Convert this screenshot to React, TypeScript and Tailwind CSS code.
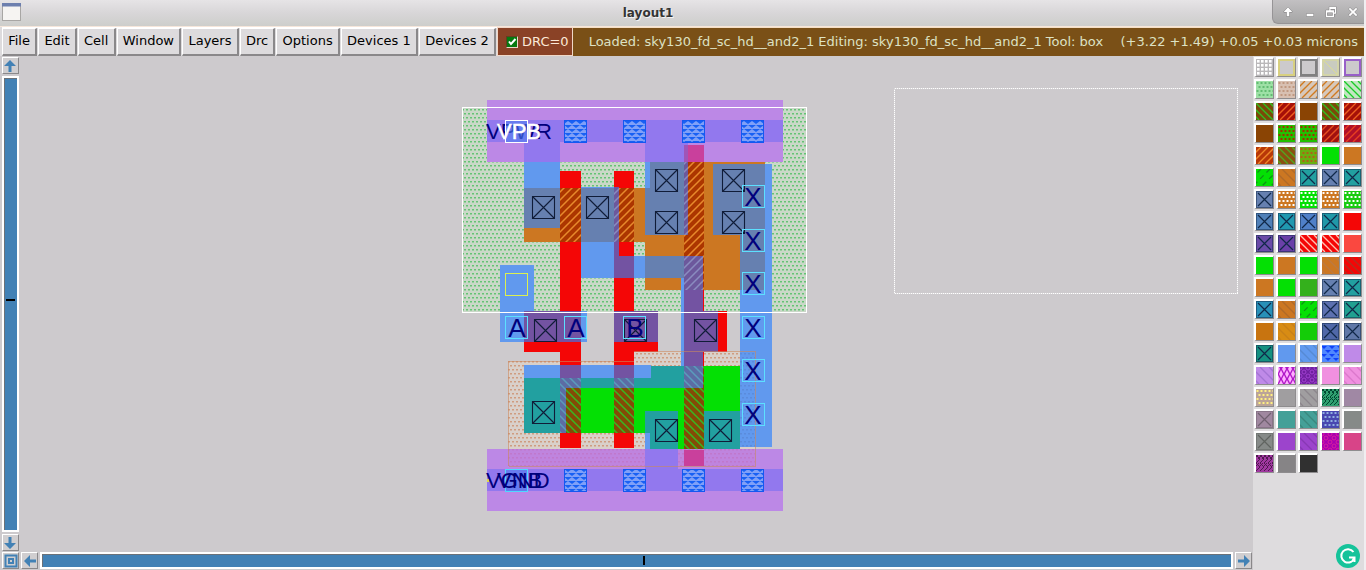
import type { ReactNode } from "react";

type Swatch = [kind: string, bg: string, fg?: string];
type Box = [x1: number, y1: number, x2: number, y2: number, fill: string];

const TEAL = "#22a0a0";
const STEEL = "#6680b0";
const GREEN = "#04e004";
const ORANGE = "#cc7722";
const BROWN = "#8a4404";
const DARKRED = "#a51008";
const SKY = "#6199ee";
const LILAC = "#bf8ae8";
const RED = "#f40606";
const PURPLE = "#7353a2";
const VIOLET = "#9278ee";

const swatches: Swatch[] = [
  ["grid", "#bab8ba", "#ffffff"], ["frame", "#cccacc", "#d8d080"], ["frame", "#cccacc", "#808080"], ["backframe", "#c9cbc0", "#dcdc90"], ["frame", "#cccacc", "#9860c8"],
  ["dots", "#9ee0a6", "#62bc72"], ["dots", "#d8c0b2", "#c09880"], ["fwd", "#d6c8bc", "#d07a20"], ["fwd", "#d6c8bc", "#d07a20"], ["back", "#c2e6c2", "#18cc28"],
  ["back", "#7a4a08", "#30c020"], ["fwd", DARKRED, "#f06020"], ["solid", BROWN], ["back", "#7a4a08", "#30c020"], ["fwd", DARKRED, "#f06020"],
  ["solid", BROWN], ["dots", "#22c000", "#a03000"], ["dots", "#22c000", "#a03000"], ["fwd", "#a01010", "#e85020"], ["fwd", "#b01028", "#e84020"],
  ["fwd", "#b83808", "#f08828"], ["back", "#8a5010", "#50a820"], ["dots", "#68b010", "#b06018"], ["solid", GREEN], ["solid", ORANGE],
  ["wide", GREEN, "#109018"], ["backwide", ORANGE, "#b06a28"], ["x", TEAL], ["x", STEEL], ["x", TEAL],
  ["x", STEEL], ["dots", ORANGE, "#ffffff"], ["dots", GREEN, "#ffffff"], ["dots", ORANGE, "#ffffff"], ["dots", "#18cc10", "#ffffff"],
  ["x", "#5080b8"], ["x", "#2098b0"], ["x", "#5080c8"], ["x", "#2098a8"], ["solid", RED],
  ["x", "#6a4aa8"], ["x", "#6a40a8"], ["back", RED, "#ffc0b0"], ["back", RED, "#ffc0b0"], ["solid", "#fa4840"],
  ["solid", GREEN], ["solid", ORANGE], ["solid", GREEN], ["backwide", ORANGE, "#bc7a40"], ["back", RED, "#b03020"],
  ["solid", ORANGE], ["solid", GREEN], ["solid", "#34b01c"], ["x", STEEL], ["x", TEAL],
  ["x", "#2890b8"], ["backwide", ORANGE, "#b06a28"], ["wide", GREEN, "#109018"], ["x", "#5c70b0"], ["x", "#20a090"],
  ["solid", "#c87410"], ["backwide", "#d88c14", "#c88018"], ["solid", "#14cc08"], ["x", "#5068a8"], ["x", "#6078a8"],
  ["x", "#149080"], ["solid", SKY], ["backwide", SKY, "#568ad4"], ["scale", "#5088ff", "#1040f8"], ["solid", LILAC],
  ["backwide", LILAC, "#a474d4"], ["diamond", "#b018c8", "#ffb0ff"], ["ring", "#7020a0", "#a040d0"], ["solid", "#f090e0"], ["backwide", "#f090e0", "#dc78cc"],
  ["dots", "#bba498", "#fff080"], ["solid", "#a09ea0"], ["backwide", "#a09ea0", "#8c868c"], ["maze", "#30a070", "#004830"], ["solid", "#a088a4"],
  ["xsoft", "#a088a0", "#706070"], ["solid", "#44a098"], ["backwide", "#44a098", "#3a887e"], ["dots", "#4848b0", "#90b0e0"], ["solid", "#868a88"],
  ["xsoft", "#868a88", "#606460"], ["solid", "#9c44cc"], ["backwide", "#9c44cc", "#8838b4"], ["ring", "#a800b0", "#d820a0"], ["solid", "#d84488"],
  ["maze", "#a038a0", "#501850"], ["solid", "#868486"], ["solid", "#303030"],
];

function SwatchArt({ kind, bg, fg = "#102848" }: { kind: string; bg: string; fg?: string }) {
  const marks: ReactNode[] = [];
  const staggered = (draw: (x: number, y: number, k: string) => ReactNode, step: number) => {
    for (let r = 0; r * step < 17; r++)
      for (let c = 0; c < 5; c++) marks.push(draw(c * 4 + (r % 2) * 2, r * step, `${r}-${c}`));
  };
  if (kind === "grid")
    for (let r = 0; r < 4; r++)
      for (let c = 0; c < 4; c++) marks.push(<rect key={`${r}${c}`} x={c * 4 + 1} y={r * 4 + 1} width="2.600" height="2.600" fill={fg} />);
  if (kind === "dots") staggered((x, y, k) => <rect key={k} x={x + 0.5} y={y + 1} width="2" height="2" fill={fg} />, 4);
  if (kind === "scale") staggered((x, y, k) => <path key={k} d={`M${x * 2 - 1} ${y + 1}h6l-3 3z`} fill={fg} />, 4);
  if (kind === "diamond") staggered((x, y, k) => <path key={k} d={`M${x * 1.5} ${y - 2}l2 4l-2 4l-2-4z`} fill={fg} />, 5);
  if (kind === "ring") staggered((x, y, k) => <circle key={k} cx={x * 2} cy={y + 1} r="2" fill="none" stroke={fg} />, 4);
  if (kind === "maze")
    for (let i = -16; i < 20; i += 4)
      marks.push(<path key={i} d={`M${i} 0l4 4l-4 4l4 4l-4 4M${i + 2} 0l-4 4M${i + 3} 8l-4 4`} stroke={fg} fill="none" />);
  const step = kind === "wide" || kind === "backwide" ? 9 : 7;
  if (kind.startsWith("fwd") || kind === "wide")
    for (let i = 5; i < 34; i += step) marks.push(<path key={i} d={`M${i} 0L${i - 17} 17`} stroke={fg} strokeWidth="1.300" strokeDasharray={kind === "wide" ? "5 4" : undefined} />);
  if (kind === "back" || kind === "backwide")
    for (let i = -14; i < 17; i += step) marks.push(<path key={i} d={`M${i} 0l17 17`} stroke={fg} strokeWidth="1.300" />);
  if (kind === "backframe") marks.push(<path key="d" d="M1 1l14 14" stroke={fg} />);
  if (kind === "frame" || kind === "backframe")
    marks.push(<rect key="f" x="1" y="1" width="15" height="15" fill="none" stroke={fg} strokeWidth={kind === "frame" ? 2 : 1} />);
  if (kind === "x" || kind === "xsoft") {
    marks.push(<rect key="b" x=".5" y=".5" width="16" height="16" stroke={fg} strokeOpacity=".5" fill="none" />);
    marks.push(<path key="x" d="M2 2l13 13M15 2L2 15" stroke={fg} fill="none" strokeWidth="1.200" />);
  }
  return (
    <svg viewBox="0 0 17 17" className="block size-[17px] overflow-hidden" aria-hidden="true">
      <rect width="17" height="17" fill={bg} />
      {marks}
    </svg>
  );
}

const wells: Box[] = [
  [462, 107, 807, 313, "url(#well)"],
];

const shapes: Box[] = [
  // implant
  [508, 361, 634, 466, "url(#implant)"],
  [634, 351, 755, 466, "url(#implant)"],
  // p diffusion
  [524, 188, 645, 242, ORANGE],
  [650, 162, 765, 188, ORANGE],
  [645, 188, 765, 290, ORANGE],
  // n diffusion
  [524, 378, 651, 433, GREEN],
  [645, 366, 740, 450, GREEN],
  // poly
  [560, 171, 581, 448, RED],
  [614, 171, 634, 448, RED],
  [684, 145, 704, 466, RED],
  [524, 311, 581, 352, RED],
  [614, 311, 658, 352, RED],
  [684, 311, 727, 352, RED],
  // transistors
  [560, 188, 581, 242, "url(#pfet)"],
  [619, 188, 634, 242, "url(#pfet)"],
  [684, 162, 704, 290, "url(#pfet)"],
  [560, 378, 581, 433, "url(#nfet)"],
  [614, 378, 634, 433, "url(#nfet)"],
  [684, 366, 704, 450, "url(#nfet)"],
  // local interconnect
  [524, 120, 560, 188, SKY],
  [524, 188, 560, 228, STEEL],
  [581, 187, 619, 278, SKY],
  [581, 188, 619, 242, STEEL],
  [614, 187, 619, 256, PURPLE],
  [614, 188, 619, 242, "url(#pfetli)"],
  [619, 256, 684, 278, SKY],
  [614, 256, 634, 278, PURPLE],
  [645, 256, 684, 278, STEEL],
  [645, 162, 650, 188, SKY],
  [650, 162, 684, 235, STEEL],
  [645, 188, 684, 235, STEEL],
  [684, 162, 688, 235, "url(#pfetli)"],
  [681, 278, 684, 366, SKY],
  [684, 256, 703, 290, "url(#pfetli)"],
  [684, 290, 703, 366, PURPLE],
  [684, 311, 718, 352, PURPLE],
  [740, 164, 772, 447, SKY],
  [713, 164, 765, 235, STEEL],
  [740, 235, 765, 290, STEEL],
  [740, 353, 755, 447, "url(#implantli)"],
  [500, 265, 534, 342, SKY],
  [524, 311, 587, 342, SKY],
  [524, 311, 581, 342, PURPLE],
  [614, 311, 658, 342, PURPLE],
  [524, 365, 651, 378, SKY],
  [524, 378, 651, 388, TEAL],
  [651, 366, 684, 388, TEAL],
  [524, 378, 560, 433, TEAL],
  [560, 365, 581, 378, PURPLE],
  [614, 365, 634, 378, PURPLE],
  [560, 378, 581, 388, "url(#nfetli)"],
  [614, 378, 634, 388, "url(#nfetli)"],
  [684, 366, 703, 388, "url(#nfetli)"],
  [560, 388, 566, 433, "url(#nfetli)"],
  [645, 411, 678, 450, TEAL],
  [645, 433, 650, 450, SKY],
  [704, 411, 740, 450, TEAL],
];

const metals: Box[] = [
  [487, 100, 783, 162, "#bc88e6"],
  [487, 120, 783, 142, VIOLET],
  [524, 142, 560, 162, VIOLET],
  [645, 142, 688, 162, VIOLET],
  [688, 145, 704, 162, "#c9409c"],
  [684, 145, 688, 162, "#a055b8"],
  [487, 449, 783, 511, "#bc88e6"],
  [508, 449, 755, 466, "url(#implantmetal)"],
  [487, 469, 783, 491, VIOLET],
  [645, 449, 678, 469, VIOLET],
  [684, 450, 704, 466, "#c9409c"],
];

const contacts = [[543, 208], [597, 208], [666, 181], [666, 223], [733, 181], [733, 223], [545, 331], [635, 331], [705, 331], [543, 413], [666, 431], [720, 431]];
const vias = [575, 634, 693, 752];
const pins = [[516, 328, "A"], [575, 328, "A"], [634, 328, "B"], [753, 197, "X"], [753, 241, "X"], [753, 284, "X"], [753, 328, "X"], [753, 371, "X"], [753, 415, "X"]] as const;

function Hatch({ id, bg, fg, back = false }: { id: string; bg: string; fg: string; back?: boolean }) {
  return (
    <pattern id={id} width="8" height="8" patternUnits="userSpaceOnUse">
      <rect width="8" height="8" fill={bg} />
      <path d={back ? "M-1 -1L9 9M-1 7l2 2M7 -1l2 2" : "M-1 9L9 -1M-1 1l2-2M7 9l2-2"} stroke={fg} strokeWidth="1.500" />
    </pattern>
  );
}

function Stipple({ id, bg, fg }: { id: string; bg: string; fg: string }) {
  return (
    <pattern id={id} width="4" height="8" patternUnits="userSpaceOnUse">
      <rect width="4" height="8" fill={bg} />
      <path d="M0 1h2v1.500h-2zM2 5h2v1.500h-2z" fill={fg} />
    </pattern>
  );
}

function Boxes({ items }: { items: Box[] }) {
  return (
    <>
      {items.map(([x1, y1, x2, y2, fill], i) => (
        <rect key={i} x={x1} y={y1} width={x2 - x1} height={y2 - y1} fill={fill} />
      ))}
    </>
  );
}

function CellLayout() {
  return (
    <svg viewBox="20 56 1233 495" className="block h-full w-full" role="img" aria-label="and2_1 cell layout">
      <defs>
        <Stipple id="well" bg="#cad8c8" fg="#64c474" />
        <Stipple id="implant" bg="#d9d0ca" fg="#cf9c80" />
        <Stipple id="implantli" bg={SKY} fg="#5b8cdc" />
        <Stipple id="implantmetal" bg="#bf84de" fg="#c078cc" />
        <Hatch id="pfet" bg="#ac3600" fg="#e88a2c" />
        <Hatch id="pfetli" bg="#6c589c" fg="#8a8cc0" />
        <Hatch id="nfet" bg="#844a06" fg="#38b820" back />
        <Hatch id="nfetli" bg="#5c6ca4" fg="#5a9cbc" back />
        <pattern id="via" width="8" height="8" patternUnits="userSpaceOnUse">
          <rect width="8" height="8" fill="#80a0f8" />
          <path d="M0 1h8l-4 3zM-4 5h8l-4 3zM4 5h8l-4 3z" fill="#1860f4" />
        </pattern>
      </defs>
      <g shapeRendering="crispEdges">
        <Boxes items={wells} />
        <Boxes items={shapes} />
        <Boxes items={metals} />
        <path d="M508.500 466V361.500H634M634 351.500H755.500V466.500H508.500" fill="none" stroke="#c88860" strokeOpacity=".6" />
        <rect x="462.500" y="107.500" width="344" height="205" fill="none" stroke="#fff" />
        <rect x="894.500" y="88.500" width="343" height="205" fill="none" stroke="#dad8da" />
        <rect x="894.500" y="88.500" width="343" height="205" fill="none" stroke="#fff" strokeDasharray="1 1" />
        {vias.flatMap((x) => [131, 480].map((y) => (
          <rect key={`${x}-${y}`} x={x - 10.5} y={y - 10.5} width="22" height="22" fill="url(#via)" stroke="#1458f0" />
        )))}
        <rect x="505.500" y="273.500" width="22" height="22" fill="none" stroke="#dcf050" />
        <path d="M487 481l2-1" stroke="#e0e040" strokeWidth="3" />
      </g>
      <g fill="none" stroke="#101c38" strokeWidth="1.100">
        {contacts.map(([x, y]) => (
          <path key={`${x}-${y}`} d={`M${x - 10.5} ${y - 11.5}h22v22h-22zl22 22M${x + 11.5} ${y - 11.5}l-22 22`} />
        ))}
      </g>
      <g fontFamily="'Liberation Sans', Arial, sans-serif" fontSize="22" fill="#00007c">
        <text x="486" y="139">VPWR</text>
        <rect x="505.500" y="120.500" width="22" height="22" fill="#4c7ff0" fillOpacity=".6" stroke="#fff" />
        <text x="497" y="139" fill="#fff" stroke="#fff" strokeWidth=".5">VPB</text>
        <rect x="505.500" y="469.500" width="22" height="22" fill="#4c7ff0" fillOpacity=".6" stroke="#50d8ff" />
        <text x="486" y="488">VGND</text>
        <text x="497" y="488">VNB</text>
        {pins.map(([x, y, name]) => (
          <g key={`${x}-${y}`}>
            <rect x={x - 10.5} y={y - 11.5} width="22" height="22" fill="none" stroke="#5ce0ff" />
            <text x={x + (name === "X" ? 0 : 1)} y={y + 9} fontSize="26" textAnchor="middle">{name}</text>
          </g>
        ))}
      </g>
    </svg>
  );
}

const raised = "border-t border-l border-b-2 border-r-2 border-t-white border-l-white border-b-[#8a888a] border-r-[#8a888a] bg-[#dddbdd]";
const track = "m-0 block appearance-none border-2 border-white bg-[#4281b5] shadow-[inset_1px_1px_0_#6b7178]";

function ArrowButton({ label, turn }: { label: string; turn: string }) {
  return (
    <button aria-label={label} className="grid size-[17px] shrink-0 place-items-center border border-t-white border-l-white border-r-[#8a888a] border-b-[#8a888a] bg-[#d0ced0]">
      <svg viewBox="0 0 14 14" className={`size-[14px] ${turn}`} aria-hidden="true">
        <path d="M7 1l6 6H8.500v6h-3V7H1z" fill="#4281b5" />
      </svg>
    </button>
  );
}

const menus = ["File", "Edit", "Cell", "Window", "Layers", "Drc", "Options", "Devices 1", "Devices 2"];

function WindowControls() {
  const icons = [
    ["Shade", "M6 0.500L1 6h3.500v5h3V6H11z"],
    ["Minimize", "M2 8h8v3H2z"],
    ["Restore", "M4 0h8v8H9.500v4H0V4h4zM5.500 2.500V4h4v2.500h1v-4zM1.500 6.500v4H8v-4z"],
    ["Close", "M1 2.500L2.500 1 6 4.500 9.500 1 11 2.500 7.500 6 11 9.500 9.500 11 6 7.500 2.500 11 1 9.500 4.500 6z"],
  ];
  return (
    <div className="flex h-6 w-[92px] items-center justify-around rounded-bl-md border-b border-l border-[#969496] bg-linear-to-b from-[#c2c0c2] to-[#a5a5a5] pl-1">
      {icons.map(([name, d]) => (
        <button key={name} aria-label={name} className="grid size-5 place-items-center">
          <svg viewBox="-1 -1 14 14" className="size-3" aria-hidden="true">
            <path d={d} fill="#fff" fillRule="evenodd" stroke="#737173" strokeWidth="1" paintOrder="stroke" />
          </svg>
        </button>
      ))}
    </div>
  );
}

export default function App() {
  return (
    <div className="flex h-screen flex-col overflow-hidden bg-[#f0eef0] pr-[2px] font-['DejaVu_Sans',sans-serif] text-[13px] text-black">
      <header className="flex h-[27px] shrink-0 items-start border-b border-[#f6e6da] bg-linear-to-b from-[#e6e4e6] via-[#d8d6d8] to-[#cdcecb]">
        <div className="w-6 pt-[3px] pl-[2px]">
          <svg viewBox="0 0 19 18" className="block h-[18px] w-[19px]" aria-hidden="true">
            <rect x=".5" y=".5" width="18" height="17" fill="#f6f4f2" stroke="#a8a6a4" />
            <rect width="19" height="3.500" fill="#6d7fae" />
          </svg>
        </div>
        <h1 className="flex-1 pt-px text-center text-xs leading-6 font-bold text-[#343434] [text-shadow:1px_1px_0_#f4f4f4]">layout1</h1>
        <WindowControls />
      </header>

      <nav className="flex h-[29px] shrink-0 bg-[#dddbdd] pl-[2px]">
        <div className="flex w-[495px] shrink-0 gap-px border-t border-white pr-px">
          {menus.map((m) => (
            <button key={m} className={`${raised} grow px-[5px] pb-px`}>{m}</button>
          ))}
        </div>
        <label className="flex items-center gap-1 border border-[#f0d8c8] bg-[#8a4226] pr-[3px] pl-2 text-[#fbe9d8]">
          <span className="grid">
            <input type="checkbox" defaultChecked className="peer col-start-1 row-start-1 m-0 size-3 appearance-none border border-t-[#604020] border-l-[#604020] border-r-[#e8d8c8] border-b-[#e8d8c8] bg-[#067a10]" />
            <svg viewBox="0 0 12 12" className="pointer-events-none col-start-1 row-start-1 hidden size-3 peer-checked:block" aria-hidden="true">
              <path d="M3 5.500l2 2.500 4.500-5" fill="none" stroke="#fff" strokeWidth="2" />
            </svg>
          </span>
          DRC=0
        </label>
        <div className="flex min-w-0 flex-1 items-center gap-[18px] border-t border-[#f3dfc4] bg-[#7a5017] pr-[6px] pl-4 whitespace-nowrap text-[#dde2c4]">
          <p className="min-w-0 flex-1 overflow-hidden">Loaded: sky130_fd_sc_hd__and2_1 Editing: sky130_fd_sc_hd__and2_1 Tool: box</p>
          <p className="shrink-0">(+3.22 +1.49) +0.05 +0.03 microns</p>
        </div>
      </nav>

      <div className="flex min-h-0 flex-1">
        <main className="flex min-w-0 flex-1 flex-col bg-[#cdcacd]">
          <div className="flex min-h-0 flex-1">
            <div className="flex w-5 shrink-0 flex-col items-center gap-[2px] pt-px">
              <ArrowButton label="Scroll up" turn="rotate-0" />
              <input type="range" aria-label="Vertical position" defaultValue={51} className={`${track} min-h-0 w-[17px] flex-1 [writing-mode:vertical-lr] [direction:rtl] [&::-webkit-slider-thumb]:h-[2px] [&::-webkit-slider-thumb]:w-[9px] [&::-webkit-slider-thumb]:appearance-none [&::-webkit-slider-thumb]:bg-black`} />
              <ArrowButton label="Scroll down" turn="rotate-180" />
            </div>
            <div className="min-w-0 flex-1"><CellLayout /></div>
          </div>
          <div className="flex h-[19px] shrink-0 items-center gap-[2px] pr-px pl-[2px]">
            <button aria-label="Zoom to fit" className="grid size-[17px] shrink-0 place-items-center border border-t-white border-l-white border-r-[#8a888a] border-b-[#8a888a] bg-[#d0ced0]">
              <svg viewBox="0 0 14 14" className="size-[14px]" aria-hidden="true">
                <path d="M1.500 1.500h11v11h-11zM5 5h4v4H5z" fill="none" stroke="#4281b5" strokeWidth="2" />
              </svg>
            </button>
            <ArrowButton label="Scroll left" turn="-rotate-90" />
            <input type="range" aria-label="Horizontal position" defaultValue={50.6} step="any" className={`${track} h-[17px] min-w-0 flex-1 [&::-webkit-slider-thumb]:h-[9px] [&::-webkit-slider-thumb]:w-[2px] [&::-webkit-slider-thumb]:appearance-none [&::-webkit-slider-thumb]:bg-black`} />
            <ArrowButton label="Scroll right" turn="rotate-90" />
          </div>
        </main>
        <aside className="w-[111px] shrink-0 bg-[#dedcde] pt-px pl-px">
          <div className="grid w-[108px] grid-cols-5 gap-[2px]">
            {swatches.map(([kind, bg, fg], i) => (
              <button key={i} aria-label={`Layer ${i + 1}`} className="size-5 border-t-2 border-l-2 border-r border-b border-t-white border-l-white border-r-[#8e8c8e] border-b-[#8e8c8e]">
                <SwatchArt kind={kind} bg={bg} fg={fg} />
              </button>
            ))}
          </div>
        </aside>
      </div>

      <button aria-label="Writing assistant" className="fixed right-[6px] bottom-[2px] size-6 rounded-full bg-[#15c39a]">
        <svg viewBox="0 0 24 24" className="block size-6" fill="none" stroke="#fff" strokeWidth="2" aria-hidden="true">
          <path d="M17.500 8A6.700 6.700 0 1 0 18.500 13.500M13 13.500h5.500v4.500M18.500 13.500l-2.500 4" />
        </svg>
      </button>
    </div>
  );
}
